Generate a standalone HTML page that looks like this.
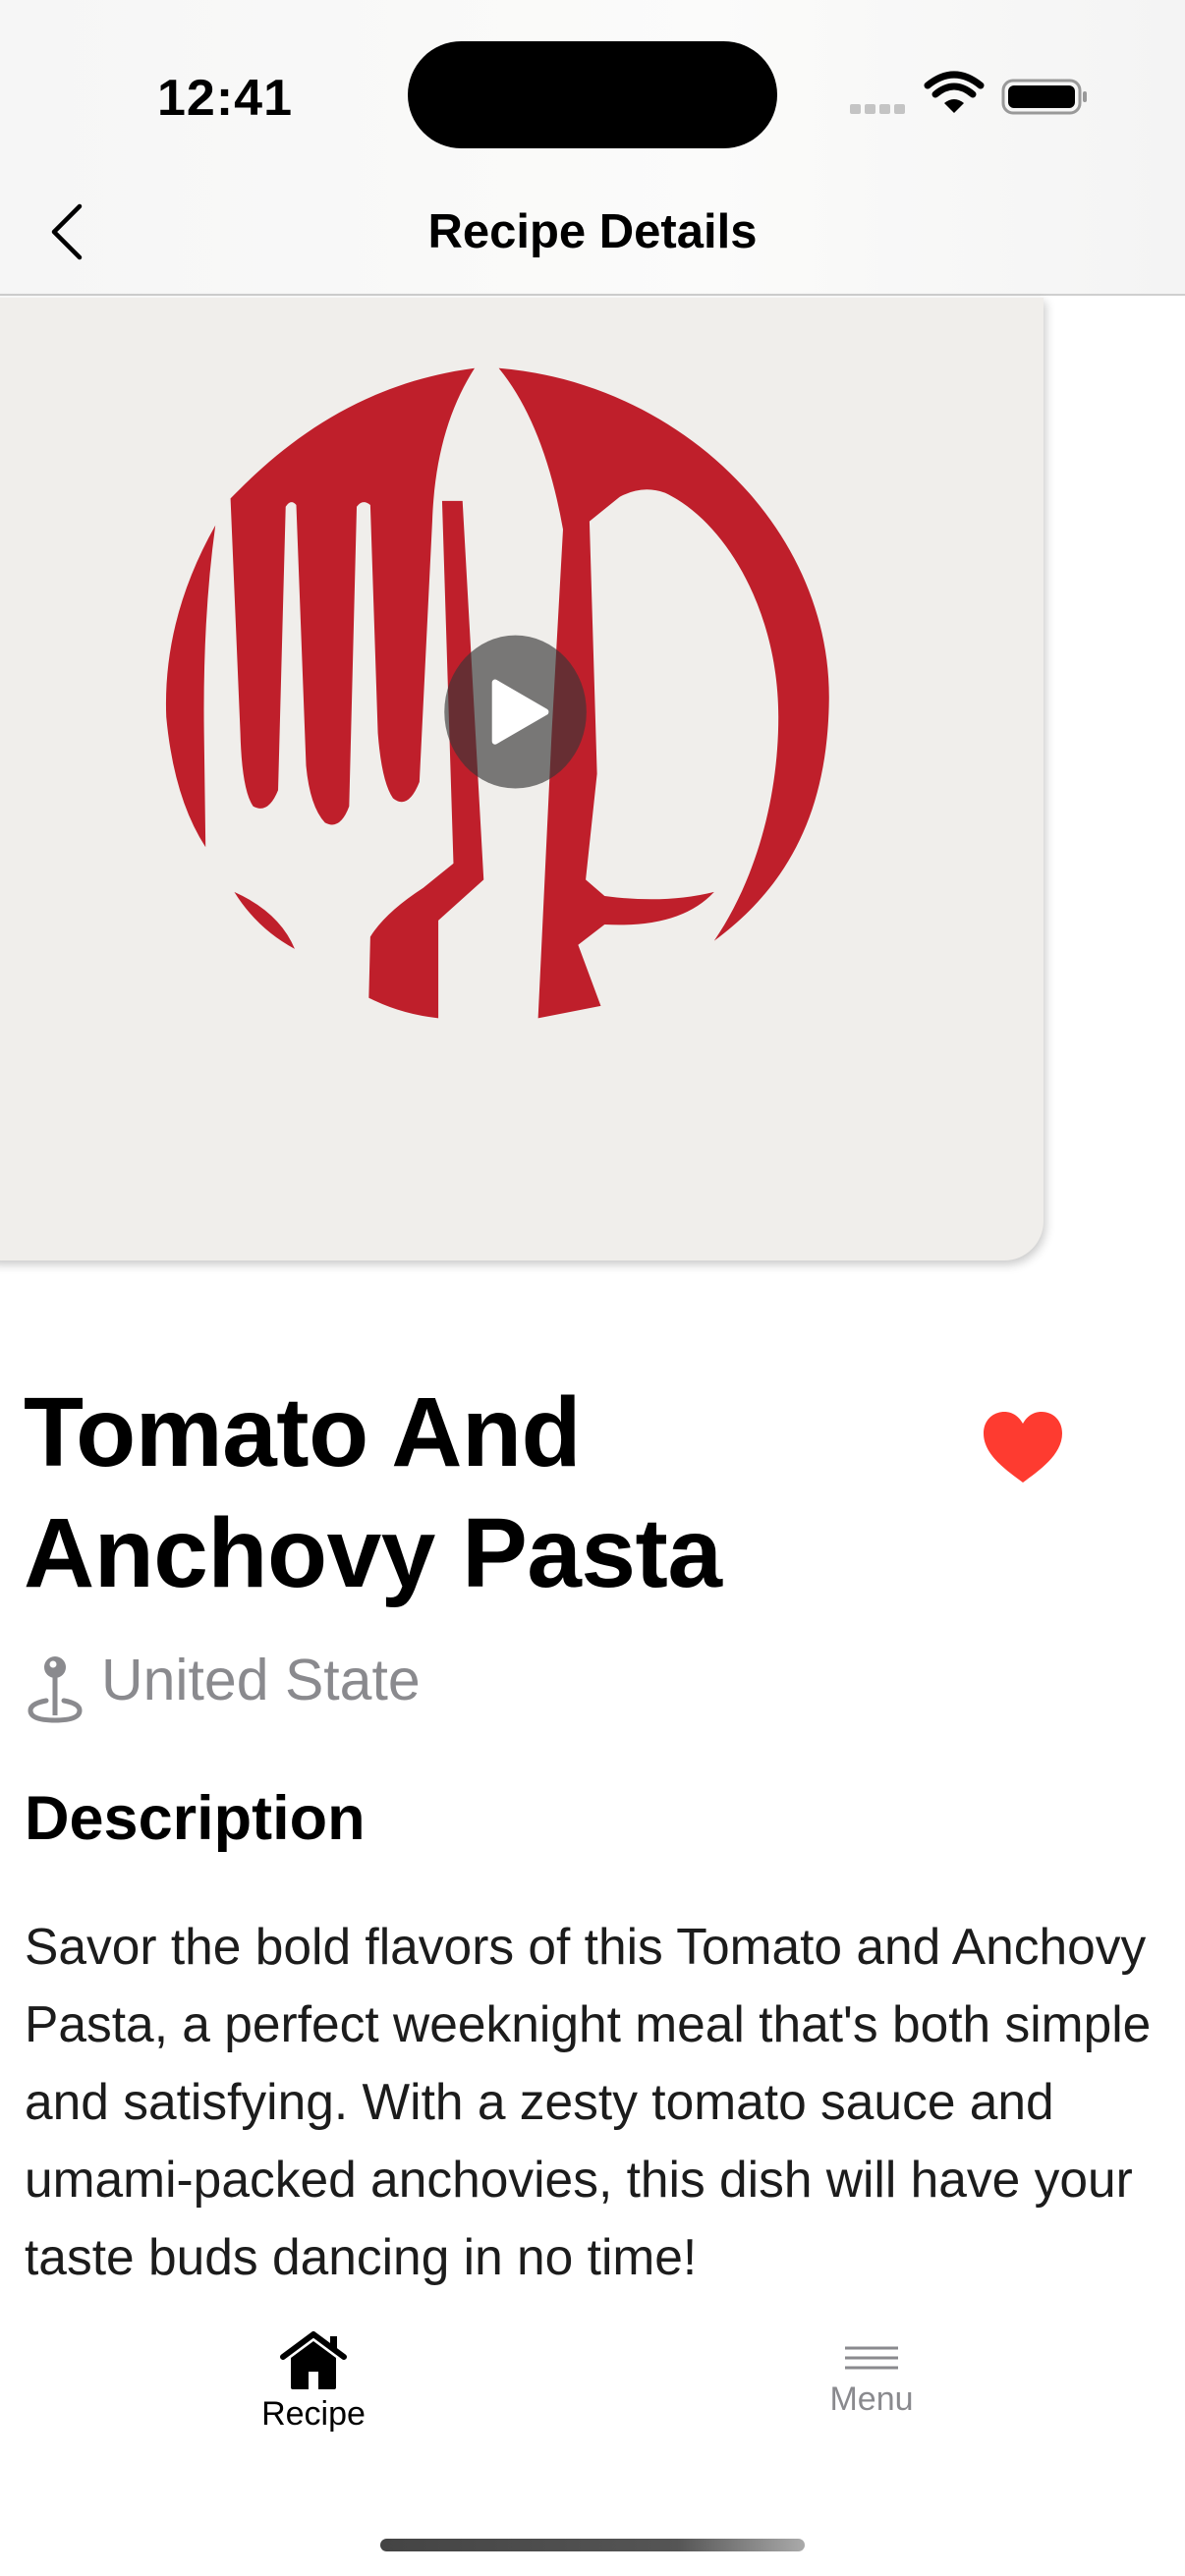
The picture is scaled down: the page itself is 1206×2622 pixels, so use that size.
<!DOCTYPE html>
<html><head><meta charset="utf-8"><style>
*{margin:0;padding:0;box-sizing:border-box}
body{width:1206px;height:2622px;background:#fff;position:relative;overflow:hidden;font-family:"Liberation Sans",sans-serif;color:#000}
.abs{position:absolute}
</style></head><body>
<div class="abs" style="left:0;top:0;width:1206px;height:301px;background:linear-gradient(90deg,#f6f6f6,#fbfbfa 60%,#f4f4f4);border-bottom:2px solid #cfcfcf"></div>
<div class="abs" style="left:160px;top:70px;font-size:52px;font-weight:bold;letter-spacing:1px">12:41</div>
<div class="abs" style="left:415px;top:42px;width:376px;height:109px;border-radius:55px;background:#000"></div>
<svg class="abs" style="left:860px;top:68px" width="250" height="60" viewBox="0 0 250 60">
<g fill="#c4c4c4"><rect x="5" y="38" width="11" height="10" rx="2"/><rect x="20" y="38" width="11" height="10" rx="2"/><rect x="35" y="38" width="11" height="10" rx="2"/><rect x="50" y="38" width="11" height="10" rx="2"/></g>
<path d="M111,47 L101,37 Q111,29 121,37Z" fill="#000"/>
<path d="M92,28 Q111,12 130,28" stroke="#000" stroke-width="7" fill="none" stroke-linecap="round"/>
<path d="M84,19 Q111,-3 138,19" stroke="#000" stroke-width="7" fill="none" stroke-linecap="round"/>
<rect x="161" y="14" width="78" height="33" rx="10" fill="none" stroke="#999" stroke-width="3"/>
<rect x="166" y="19" width="68" height="23" rx="6" fill="#000"/>
<rect x="242" y="25" width="4" height="11" rx="2" fill="#999"/>
</svg>
<svg class="abs" style="left:45px;top:206px" width="45" height="60"><path d="M36,4 L10,30 L36,56" stroke="#000" stroke-width="4.5" fill="none" stroke-linecap="round" stroke-linejoin="round"/></svg>
<div class="abs" style="left:0;top:208px;width:1206px;text-align:center;font-size:49px;font-weight:bold">Recipe Details</div>

<div class="abs" style="left:-40px;top:303px;width:1102px;height:980px;background:#f0eeeb;border-radius:0 0 40px 40px;box-shadow:2px 4px 10px rgba(0,0,0,0.22)"></div>
<svg class="abs" style="left:0;top:0" width="1206" height="1300" viewBox="0 0 1568 1568" preserveAspectRatio="none">
<g fill="#bf1f2b">
<path d="M285,645 Q215,760 220,880 Q230,980 272,1040 L270,900 Q268,760 285,645Z"/>
<path d="M305,612 C380,540 480,470 628,452 C595,500 575,560 572,640 L555,960 Q540,995 520,980 Q505,960 500,900 L490,620 Q480,612 472,622 L462,990 Q450,1020 430,1010 Q410,990 405,940 L392,620 Q385,612 378,622 L368,970 Q355,1000 335,990 Q320,970 318,900 Z"/>
<path d="M585,615 L612,615 L640,1080 L580,1130 L580,1250 Q530,1245 488,1225 L490,1150 Q510,1120 560,1090 L600,1060 Z"/>
<path d="M310,1095 Q370,1120 390,1165 Q340,1140 310,1095Z"/>
<path d="M660,452 C900,470 1100,650 1097,860 C1095,1000 1040,1090 945,1155 C1000,1080 1030,980 1030,880 C1030,750 960,640 880,605 Q850,595 820,610 L780,640 L790,950 L775,1080 L800,1100 Q880,1110 945,1095 Q900,1140 800,1135 L765,1160 L795,1235 L712,1250 L730,900 L745,650 Q720,520 660,452Z"/>
</g>
<circle cx="682" cy="874" r="94" fill="rgba(55,55,55,0.65)"/>
<path d="M655,838 L655,910 L722,874Z" fill="#fff" stroke="#fff" stroke-width="8" stroke-linejoin="round"/>
</svg>

<div class="abs" style="left:24px;top:1397px;font-size:100px;font-weight:bold;line-height:123px;letter-spacing:-0.5px;white-space:nowrap">Tomato And<br>Anchovy Pasta</div>
<svg class="abs" style="left:995px;top:1433px" width="92" height="80" viewBox="0 0 92 80"><path d="M46,76 C30,64 6,48 6,26 C6,12 16,4 27,4 C36,4 42,9 46,16 C50,9 56,4 65,4 C76,4 86,12 86,26 C86,48 62,64 46,76Z" fill="#fe3b30"/></svg>
<svg class="abs" style="left:25px;top:1680px" width="65" height="75" viewBox="0 0 65 75"><circle cx="31" cy="17" r="11" fill="#8a8a8e"/><circle cx="29" cy="14" r="3.5" fill="#fff"/><path d="M31,26 L31,66" stroke="#8a8a8e" stroke-width="5"/><path d="M22,51 Q6,54 6,61 Q6,71 31,71 Q56,71 56,61 Q56,54 40,51" stroke="#8a8a8e" stroke-width="5" fill="none" stroke-linecap="round"/></svg>
<div class="abs" style="left:103px;top:1675px;font-size:59px;color:#8a8a8e;line-height:70px;white-space:nowrap">United State</div>
<div class="abs" style="left:25px;top:1816px;font-size:63px;font-weight:bold;line-height:70px">Description</div>
<div class="abs" style="left:25px;top:1942px;font-size:51.5px;line-height:79px;color:#1c1c1c;white-space:nowrap">Savor the bold flavors of this Tomato and Anchovy<br>Pasta, a perfect weeknight meal that's both simple<br>and satisfying. With a zesty tomato sauce and<br>umami-packed anchovies, this dish will have your<br>taste buds dancing in no time!</div>

<svg class="abs" style="left:284px;top:2372px" width="70" height="62" viewBox="0 0 70 62"><path d="M4,27 L35,4 L66,27" stroke="#000" stroke-width="6" fill="none" stroke-linejoin="round" stroke-linecap="round"/><rect x="52" y="6" width="7" height="14" fill="#000"/><path d="M12,28 L35,11 L58,28 L58,58 Q58,60 56,60 L14,60 Q12,60 12,58Z" fill="#000"/><rect x="30" y="42" width="10" height="18" fill="#fff"/></svg>
<div class="abs" style="left:219px;top:2438px;width:200px;text-align:center;font-size:34px">Recipe</div>
<svg class="abs" style="left:858px;top:2386px" width="58" height="30"><g stroke="#8a8a8e" stroke-width="3"><line x1="2" y1="4" x2="56" y2="4"/><line x1="2" y1="14" x2="56" y2="14"/><line x1="2" y1="24" x2="56" y2="24"/></g></svg>
<div class="abs" style="left:787px;top:2423px;width:200px;text-align:center;font-size:34px;color:#8a8a8e">Menu</div>
<div class="abs" style="left:387px;top:2584px;width:432px;height:13px;border-radius:7px;background:linear-gradient(90deg,#444,#555 70%,#aaa)"></div>
</body></html>
